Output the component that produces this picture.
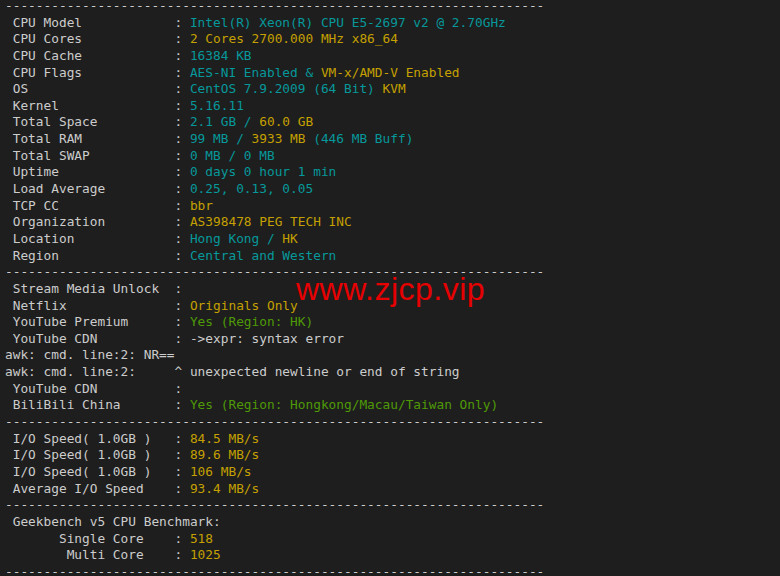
type Seg = [string, string?]

const C = 'text-[#06989a]'
const Y = 'text-[#c4a000]'
const G = 'text-[#4e9a06]'

const DASH = '-'.repeat(70)

function kv(label: string, indent = 1): string {
  return (' '.repeat(indent) + label).padEnd(22, ' ') + ': '
}

const rows: Seg[][] = [
  [[DASH]],
  [[kv('CPU Model')], ['Intel(R) Xeon(R) CPU E5-2697 v2 @ 2.70GHz', C]],
  [[kv('CPU Cores')], ['2 Cores 2700.000 MHz x86_64', Y]],
  [[kv('CPU Cache')], ['16384 KB', C]],
  [[kv('CPU Flags')], ['AES-NI Enabled & ', C], ['VM-x/AMD-V Enabled', Y]],
  [[kv('OS')], ['CentOS 7.9.2009 (64 Bit) ', C], ['KVM', Y]],
  [[kv('Kernel')], ['5.16.11', C]],
  [[kv('Total Space')], ['2.1 GB / ', C], ['60.0 GB', Y]],
  [[kv('Total RAM')], ['99 MB / ', C], ['3933 MB', Y], [' (446 MB Buff)', C]],
  [[kv('Total SWAP')], ['0 MB / 0 MB', C]],
  [[kv('Uptime')], ['0 days 0 hour 1 min', C]],
  [[kv('Load Average')], ['0.25, 0.13, 0.05', C]],
  [[kv('TCP CC')], ['bbr', Y]],
  [[kv('Organization')], ['AS398478 PEG TECH INC', Y]],
  [[kv('Location')], ['Hong Kong / ', C], ['HK', Y]],
  [[kv('Region')], ['Central and Western', C]],
  [[DASH]],
  [[kv('Stream Media Unlock')]],
  [[kv('Netflix')], ['Originals Only', Y]],
  [[kv('YouTube Premium')], ['Yes (Region: HK)', G]],
  [[kv('YouTube CDN')], ['->expr: syntax error']],
  [['awk: cmd. line:2: NR==']],
  [['awk: cmd. line:2:     ^ unexpected newline or end of string']],
  [[kv('YouTube CDN')]],
  [[kv('BiliBili China')], ['Yes (Region: Hongkong/Macau/Taiwan Only)', G]],
  [[DASH]],
  [[kv('I/O Speed( 1.0GB )')], ['84.5 MB/s', Y]],
  [[kv('I/O Speed( 1.0GB )')], ['89.6 MB/s', Y]],
  [[kv('I/O Speed( 1.0GB )')], ['106 MB/s', Y]],
  [[kv('Average I/O Speed')], ['93.4 MB/s', Y]],
  [[DASH]],
  [[' Geekbench v5 CPU Benchmark:']],
  [[kv('Single Core', 7)], ['518', Y]],
  [[kv('Multi Core', 8)], ['1025', Y]],
  [[DASH]],
]

export default function App() {
  return (
    <div className="relative h-[576px] w-[780px] overflow-hidden bg-[#1e1e1e]">
      <div className="-mt-[2px] pl-[5px] font-['DejaVu_Sans_Mono',monospace] text-[12.8px] leading-[16.65px] text-[#cccccc]">
        {rows.map((segs, i) => (
          <div key={i} className="h-[16.65px] whitespace-pre">
            {segs.map(([t, cls], j) => (
              <span key={j} className={cls}>
                {t}
              </span>
            ))}
          </div>
        ))}
      </div>
      <div className="absolute left-[296px] top-[273px] font-['Liberation_Sans',Arial,sans-serif] text-[32px] leading-[32px] tracking-[0.5px] text-[#e60000]">
        www.zjcp.vip
      </div>
    </div>
  )
}
